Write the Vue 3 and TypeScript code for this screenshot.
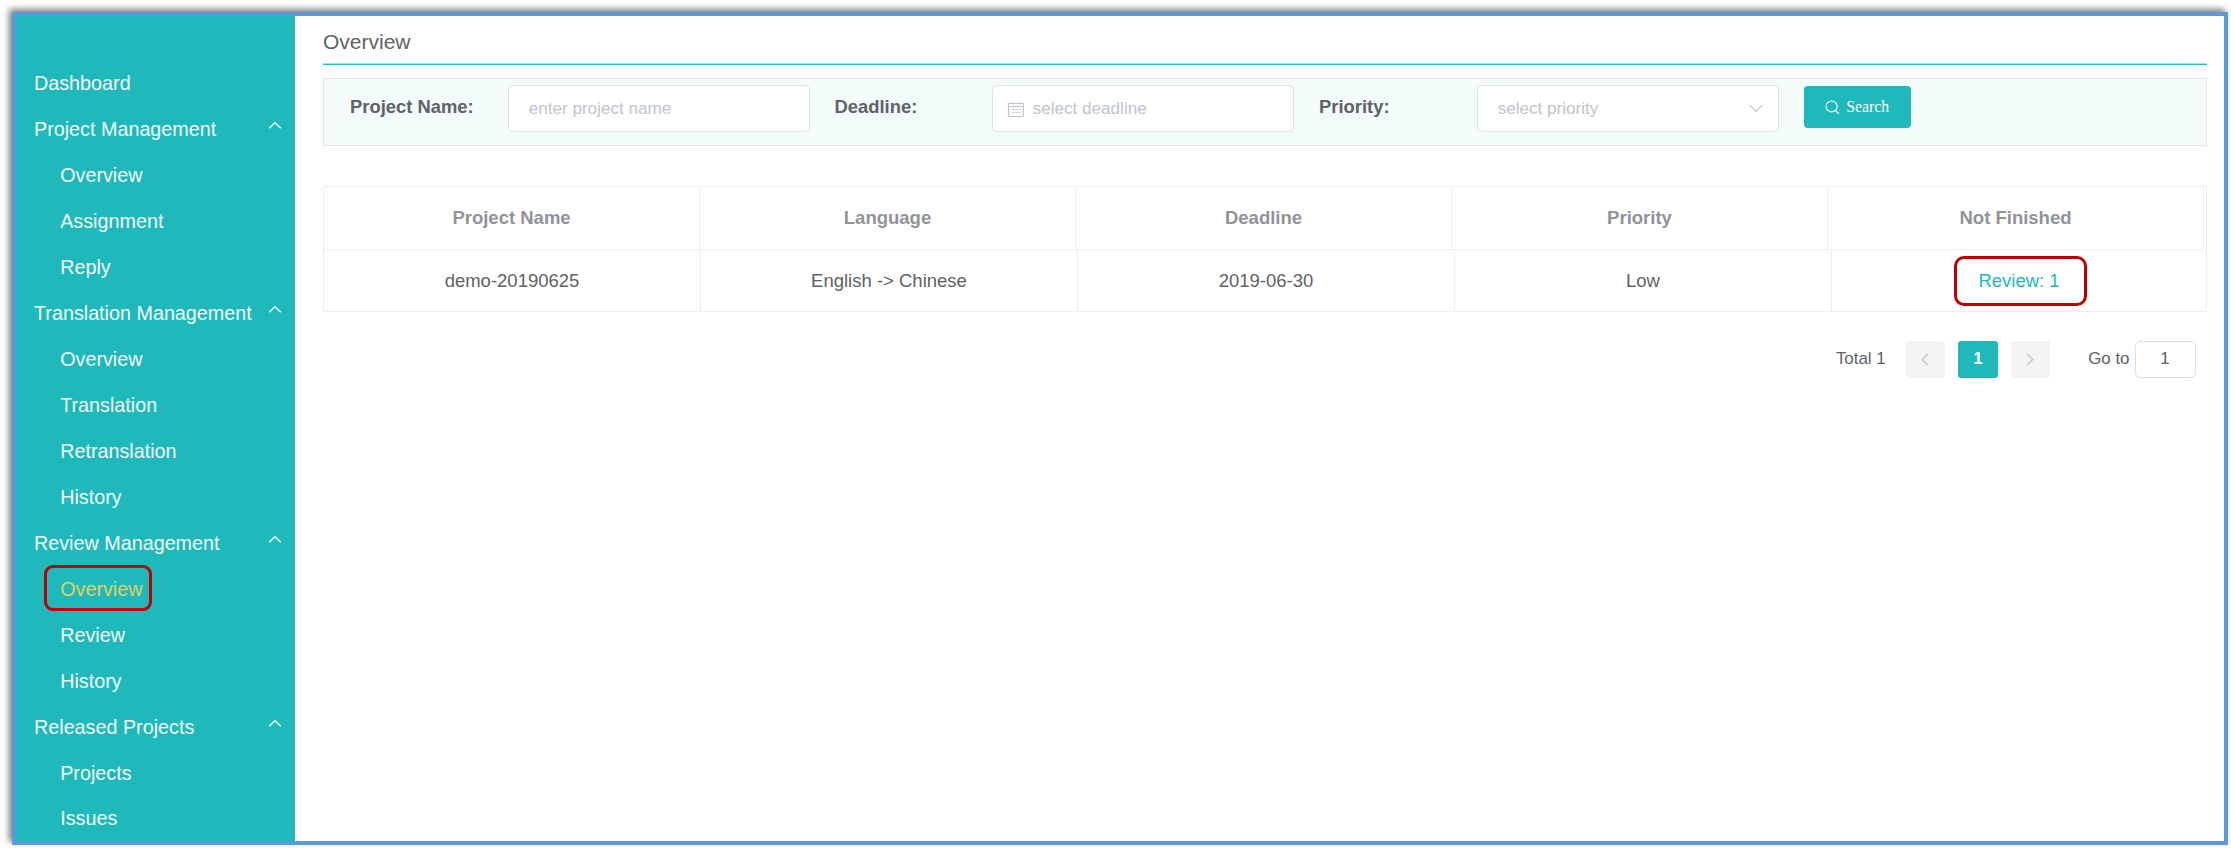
<script setup lang="ts">
interface MenuGroup {
  title: string
  children: string[]
}

const groups: MenuGroup[] = [
  { title: 'Project Management', children: ['Overview', 'Assignment', 'Reply'] },
  { title: 'Translation Management', children: ['Overview', 'Translation', 'Retranslation', 'History'] },
  { title: 'Review Management', children: ['Overview', 'Review', 'History'] },
  { title: 'Released Projects', children: ['Projects', 'Issues'] },
]

const columns: string[] = ['Project Name', 'Language', 'Deadline', 'Priority', 'Not Finished']
const cells: string[] = ['demo-20190625', 'English -> Chinese', '2019-06-30', 'Low']

function isActive(group: string, item: string): boolean {
  return group === 'Review Management' && item === 'Overview'
}
</script>

<template>
  <div class="page">
    <div class="frame">
      <nav class="sidebar">
        <div class="item top">Dashboard</div>
        <template v-for="group in groups" :key="group.title">
          <div class="item top">
            <span>{{ group.title }}</span>
            <svg class="caret" width="14" height="9" viewBox="0 0 14 9">
              <path d="M1.200 7.300 7 1.700l5.800 5.600" />
            </svg>
          </div>
          <div
            v-for="child in group.children"
            :key="child"
            class="item sub"
            :class="{ active: isActive(group.title, child) }"
          >
            <span>{{ child }}</span>
          </div>
        </template>
      </nav>

      <main class="content">
        <h1 class="title">Overview</h1>

        <section class="filters">
          <div class="field">
            <label>Project Name:</label>
            <div class="input"><span>enter project name</span></div>
          </div>
          <div class="field">
            <label>Deadline:</label>
            <div class="input with-icon">
              <svg width="16" height="16" viewBox="0 0 16 16">
                <path d="M.5 2.500h15v13H.5zM.5 5.500h15M4.500 .5v3M11.500 .5v3" />
                <path d="M3.700 8.500h8.800M3.700 11.500h8.800" stroke-dasharray="2 1.400" />
              </svg>
              <span>select deadline</span>
            </div>
          </div>
          <div class="field">
            <label>Priority:</label>
            <div class="input">
              <span>select priority</span>
              <svg class="arrow" width="14" height="9" viewBox="0 0 14 9">
                <path d="M.8 1.200 7 7.500l6.200-6.300" />
              </svg>
            </div>
          </div>
          <button class="search">
            <svg width="15" height="15" viewBox="0 0 16 16">
              <circle cx="7" cy="6.900" r="5.900" />
              <path d="m11.200 11.200 3.600 3.600" />
            </svg>
            <span>Search</span>
          </button>
        </section>

        <section class="table">
          <div class="row head">
            <div v-for="column in columns" :key="column" class="cell">{{ column }}</div>
          </div>
          <div class="row body">
            <div v-for="cell in cells" :key="cell" class="cell">{{ cell }}</div>
            <div class="cell"><a class="review">Review: 1</a></div>
          </div>
        </section>

        <section class="pager">
          <span class="total">Total 1</span>
          <span class="btn">
            <svg width="8" height="13" viewBox="0 0 8 13"><path d="M6.800 1 1.200 6.500l5.600 5.500" /></svg>
          </span>
          <span class="btn current">1</span>
          <span class="btn">
            <svg width="8" height="13" viewBox="0 0 8 13"><path d="m1.200 1 5.600 5.500L1.200 12" /></svg>
          </span>
          <span class="goto">Go to</span>
          <span class="jump">1</span>
        </section>
      </main>
    </div>
  </div>
</template>

<style>
body {
  margin: 0;
  background: #fff;
}
</style>

<style scoped>
.page {
  box-sizing: border-box;
  width: 2231px;
  height: 848px;
  padding: 12px 3px 3px 12px;
  overflow: hidden;
  font-family: "Liberation Sans", Arial, sans-serif;
  color: #606266;
}
svg {
  fill: none;
  flex: none;
}
.frame {
  box-sizing: border-box;
  display: flex;
  height: 833px;
  border: 4px solid #5b9bd5;
  border-radius: 3px 1px 0 1px;
  background: #fff;
  box-shadow: -3px -3px 6px rgba(0, 0, 0, 0.5);
}
.sidebar {
  box-sizing: border-box;
  width: 279px;
  padding-top: 44.500px;
  background: #1fb9bc;
  color: #f4fbfb;
  font-size: 19.750px;
}
.item {
  display: flex;
  align-items: center;
  height: 45.970px;
}
.top {
  justify-content: space-between;
  padding: 0 13px 0 18px;
}
.sub {
  padding-left: 44.200px;
}
.caret {
  margin-bottom: 7px;
  stroke: #f4fbfb;
  stroke-width: 1.5;
}
.active {
  position: relative;
  color: #e3cf62;
}
.active::after {
  content: "";
  position: absolute;
  box-sizing: border-box;
  left: 28px;
  top: -1.500px;
  width: 108px;
  height: 46px;
  border: 3px solid #c00000;
  border-radius: 9px;
}
.content {
  box-sizing: border-box;
  flex: 1;
  padding: 0 17px 0 28px;
}
.title {
  box-sizing: border-box;
  height: 49px;
  margin: 0 0 13px;
  border-bottom: 1px solid #2bbcbf;
  box-shadow: inset 0 -1px #a5e2e3;
  font-size: 21px;
  font-weight: 400;
  line-height: 51px;
}
.filters {
  box-sizing: border-box;
  display: flex;
  height: 68px;
  padding: 6px 0 0 26px;
  border: 1px solid #e3e6e6;
  background: #f3fbfb;
}
.field {
  display: flex;
  width: 484.500px;
}
.field label {
  width: 157.700px;
  font-size: 18.4px;
  font-weight: 700;
  line-height: 43px;
}
.input {
  box-sizing: border-box;
  display: flex;
  align-items: center;
  justify-content: space-between;
  width: 302px;
  height: 47px;
  padding: 0 15px 0 20px;
  border: 1px solid #dcdfe6;
  border-radius: 5px;
  background: #fff;
  color: #c0c4cc;
  font-size: 17.1px;
}
.input svg {
  stroke: #c0c4cc;
  stroke-width: 1.2;
}
.with-icon {
  justify-content: flex-start;
  gap: 9px;
  padding-left: 14.500px;
}
.with-icon svg {
  stroke-width: 1;
}
.search {
  display: flex;
  align-items: center;
  justify-content: center;
  gap: 6.500px;
  width: 107px;
  height: 42px;
  margin: 1px 0 0;
  padding: 0;
  border: 0;
  border-radius: 4px;
  background: #1fb9bc;
  color: #fff;
  font: 15.800px "Liberation Serif", "Times New Roman", serif;
}
.search svg {
  stroke: #fff;
  stroke-width: 1.2;
}
.table {
  box-sizing: border-box;
  height: 126px;
  margin-top: 40px;
  border: 1px solid #ebeef5;
}
.row {
  display: grid;
  font-size: 18.500px;
  text-align: center;
}
.head {
  grid-template-columns: repeat(5, 376px);
  color: #909399;
  font-weight: 700;
}
.body {
  grid-template-columns: repeat(4, 377px) 1fr;
}
.cell {
  box-sizing: border-box;
  height: 63px;
  border-right: 1px solid #ebeef5;
  line-height: 61px;
}
.head .cell {
  border-bottom: 1px solid #ebeef5;
}
.body .cell {
  height: 61px;
  line-height: 62px;
}
.body .cell:last-child {
  border-right: 0;
}
.review {
  position: relative;
  color: #1fb9bc;
}
.review::after {
  content: "";
  position: absolute;
  box-sizing: border-box;
  left: -24px;
  top: -14px;
  width: 133px;
  height: 50px;
  border: 3px solid #c00000;
  border-radius: 10px;
}
.pager {
  display: flex;
  align-items: center;
  justify-content: flex-end;
  height: 37px;
  margin-top: 28.500px;
  padding-right: 11.500px;
  font-size: 16.900px;
}
.total {
  margin-right: 7px;
}
.btn {
  display: flex;
  align-items: center;
  justify-content: center;
  width: 39.500px;
  height: 37px;
  margin-left: 13px;
  border-radius: 3px;
  background: #f4f4f5;
}
.btn svg {
  stroke: #c0c4cc;
  stroke-width: 1.5;
}
.current {
  background: #1fb9bc;
  color: #fff;
  font-weight: 700;
}
.goto {
  margin: 0 5px 0 38px;
}
.jump {
  box-sizing: border-box;
  width: 61px;
  height: 37px;
  border: 1px solid #dcdfe6;
  border-radius: 5px;
  line-height: 34px;
  text-align: center;
}
</style>
